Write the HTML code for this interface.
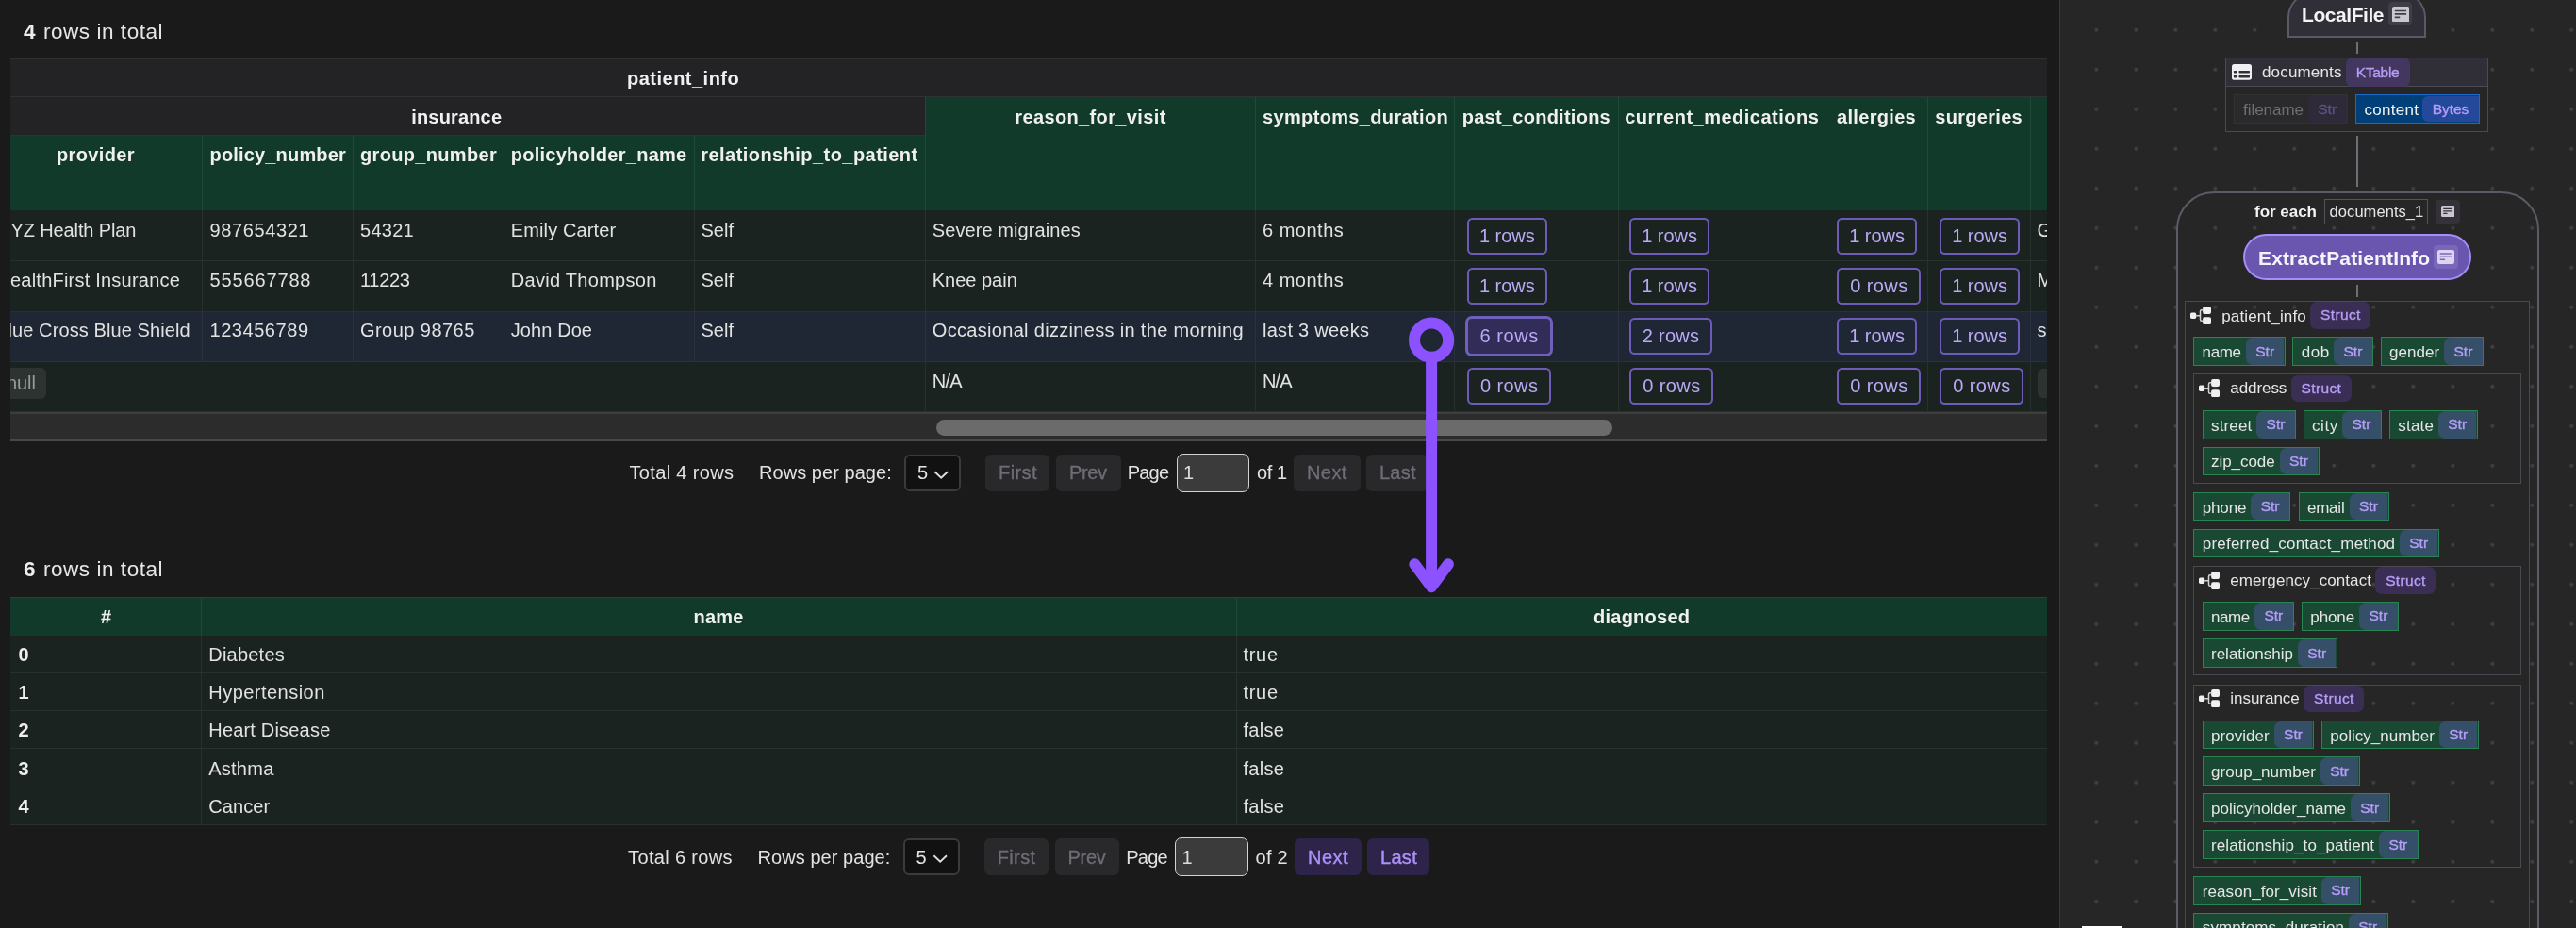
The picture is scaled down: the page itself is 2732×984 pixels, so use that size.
<!DOCTYPE html>
<html lang="en"><head><meta charset="utf-8"><title>CocoInsight data preview</title>
<style>
html,body{margin:0;padding:0;background:#1a1a1a;}
body{width:2732px;height:984px;overflow:hidden;position:relative;font-family:'Liberation Sans', sans-serif;}
div,span,svg{position:absolute;box-sizing:border-box;}
span{white-space:pre;line-height:1;}
</style></head><body>
<div id="root" style="left:0;top:0;width:2732px;height:984px;will-change:transform;">
<!-- summary 1 -->
<span style="left:25px;top:23px;font-size:22.5px;color:#eeeeee;font-weight:700;">4</span>
<span style="left:46px;top:23px;font-size:22.5px;color:#e6e6e6;letter-spacing:0.54px;">rows in total</span>
<div style="left:11px;top:60px;width:2159.5px;height:408px;overflow:hidden;">
<div style="left:0px;top:2px;width:2159.5px;height:81.5px;background:#232326;"></div>
<div style="left:0px;top:2px;width:2159.5px;height:1px;background:#2f2f32;"></div>
<div style="left:0px;top:42px;width:2159.5px;height:1px;background:#303035;"></div>
<div style="left:0px;top:82.5px;width:970.25px;height:1px;background:#303035;"></div>
<div style="left:970.25px;top:42.5px;width:1189.25px;height:120.5px;background:#113a2a;"></div>
<div style="left:0px;top:83.5px;width:970.25px;height:79.5px;background:#113a2a;"></div>
<div style="left:202.75px;top:83.5px;width:1px;height:79.5px;background:#1e4a38;"></div>
<div style="left:362.75px;top:83.5px;width:1px;height:79.5px;background:#1e4a38;"></div>
<div style="left:522.75px;top:83.5px;width:1px;height:79.5px;background:#1e4a38;"></div>
<div style="left:724.75px;top:83.5px;width:1px;height:79.5px;background:#1e4a38;"></div>
<div style="left:969.75px;top:42.5px;width:1px;height:120.5px;background:#1e4a38;"></div>
<div style="left:1320px;top:42.5px;width:1px;height:120.5px;background:#1e4a38;"></div>
<div style="left:1531.25px;top:42.5px;width:1px;height:120.5px;background:#1e4a38;"></div>
<div style="left:1704.5px;top:42.5px;width:1px;height:120.5px;background:#1e4a38;"></div>
<div style="left:1924px;top:42.5px;width:1px;height:120.5px;background:#1e4a38;"></div>
<div style="left:2033px;top:42.5px;width:1px;height:120.5px;background:#1e4a38;"></div>
<div style="left:2142px;top:42.5px;width:1px;height:120.5px;background:#1e4a38;"></div>
<div style="left:0px;top:162.5px;width:2159.5px;height:1px;background:#0f3324;"></div>
<div style="left:0px;top:163px;width:2159.5px;height:53.25px;background:#1b2321;"></div>
<div style="left:0px;top:216.25px;width:2159.5px;height:53.5px;background:#1b2321;"></div>
<div style="left:0px;top:269.75px;width:2159.5px;height:53.5px;background:#1f2634;"></div>
<div style="left:0px;top:323.25px;width:2159.5px;height:53.25px;background:#1b2321;"></div>
<div style="left:202.75px;top:163px;width:1px;height:53.25px;background:#29312e;"></div>
<div style="left:362.75px;top:163px;width:1px;height:53.25px;background:#29312e;"></div>
<div style="left:522.75px;top:163px;width:1px;height:53.25px;background:#29312e;"></div>
<div style="left:724.75px;top:163px;width:1px;height:53.25px;background:#29312e;"></div>
<div style="left:969.75px;top:163px;width:1px;height:53.25px;background:#29312e;"></div>
<div style="left:1320px;top:163px;width:1px;height:53.25px;background:#29312e;"></div>
<div style="left:1531.25px;top:163px;width:1px;height:53.25px;background:#29312e;"></div>
<div style="left:1704.5px;top:163px;width:1px;height:53.25px;background:#29312e;"></div>
<div style="left:1924px;top:163px;width:1px;height:53.25px;background:#29312e;"></div>
<div style="left:2033px;top:163px;width:1px;height:53.25px;background:#29312e;"></div>
<div style="left:2142px;top:163px;width:1px;height:53.25px;background:#29312e;"></div>
<div style="left:0px;top:216px;width:2159.5px;height:1px;background:#29312e;"></div>
<div style="left:202.75px;top:216.25px;width:1px;height:53.5px;background:#29312e;"></div>
<div style="left:362.75px;top:216.25px;width:1px;height:53.5px;background:#29312e;"></div>
<div style="left:522.75px;top:216.25px;width:1px;height:53.5px;background:#29312e;"></div>
<div style="left:724.75px;top:216.25px;width:1px;height:53.5px;background:#29312e;"></div>
<div style="left:969.75px;top:216.25px;width:1px;height:53.5px;background:#29312e;"></div>
<div style="left:1320px;top:216.25px;width:1px;height:53.5px;background:#29312e;"></div>
<div style="left:1531.25px;top:216.25px;width:1px;height:53.5px;background:#29312e;"></div>
<div style="left:1704.5px;top:216.25px;width:1px;height:53.5px;background:#29312e;"></div>
<div style="left:1924px;top:216.25px;width:1px;height:53.5px;background:#29312e;"></div>
<div style="left:2033px;top:216.25px;width:1px;height:53.5px;background:#29312e;"></div>
<div style="left:2142px;top:216.25px;width:1px;height:53.5px;background:#29312e;"></div>
<div style="left:0px;top:269.5px;width:2159.5px;height:1px;background:#29312e;"></div>
<div style="left:202.75px;top:269.75px;width:1px;height:53.5px;background:#2b3040;"></div>
<div style="left:362.75px;top:269.75px;width:1px;height:53.5px;background:#2b3040;"></div>
<div style="left:522.75px;top:269.75px;width:1px;height:53.5px;background:#2b3040;"></div>
<div style="left:724.75px;top:269.75px;width:1px;height:53.5px;background:#2b3040;"></div>
<div style="left:969.75px;top:269.75px;width:1px;height:53.5px;background:#2b3040;"></div>
<div style="left:1320px;top:269.75px;width:1px;height:53.5px;background:#2b3040;"></div>
<div style="left:1531.25px;top:269.75px;width:1px;height:53.5px;background:#2b3040;"></div>
<div style="left:1704.5px;top:269.75px;width:1px;height:53.5px;background:#2b3040;"></div>
<div style="left:1924px;top:269.75px;width:1px;height:53.5px;background:#2b3040;"></div>
<div style="left:2033px;top:269.75px;width:1px;height:53.5px;background:#2b3040;"></div>
<div style="left:2142px;top:269.75px;width:1px;height:53.5px;background:#2b3040;"></div>
<div style="left:0px;top:323px;width:2159.5px;height:1px;background:#2b3040;"></div>
<div style="left:969.75px;top:323.25px;width:1px;height:53.25px;background:#29312e;"></div>
<div style="left:1320px;top:323.25px;width:1px;height:53.25px;background:#29312e;"></div>
<div style="left:1531.25px;top:323.25px;width:1px;height:53.25px;background:#29312e;"></div>
<div style="left:1704.5px;top:323.25px;width:1px;height:53.25px;background:#29312e;"></div>
<div style="left:1924px;top:323.25px;width:1px;height:53.25px;background:#29312e;"></div>
<div style="left:2033px;top:323.25px;width:1px;height:53.25px;background:#29312e;"></div>
<div style="left:2142px;top:323.25px;width:1px;height:53.25px;background:#29312e;"></div>
<div style="left:0px;top:376.25px;width:2159.5px;height:1px;background:#29312e;"></div>
<span style="left:654px;top:13px;font-size:20px;color:#f0f0f0;font-weight:700;letter-spacing:0.49px;">patient_info</span>
<span style="left:425.25px;top:54px;font-size:20px;color:#f0f0f0;font-weight:700;letter-spacing:0.16px;">insurance</span>
<span style="left:49px;top:94px;font-size:20px;color:#f0f0f0;font-weight:700;letter-spacing:0.35px;">provider</span>
<span style="left:211.5px;top:94px;font-size:20px;color:#f0f0f0;font-weight:700;letter-spacing:0.17px;">policy_number</span>
<span style="left:371px;top:94px;font-size:20px;color:#f0f0f0;font-weight:700;letter-spacing:0.33px;">group_number</span>
<span style="left:530.75px;top:94px;font-size:20px;color:#f0f0f0;font-weight:700;letter-spacing:0.26px;">policyholder_name</span>
<span style="left:732.25px;top:94px;font-size:20px;color:#f0f0f0;font-weight:700;letter-spacing:0.45px;">relationship_to_patient</span>
<span style="left:1065.25px;top:54px;font-size:20px;color:#f0f0f0;font-weight:700;letter-spacing:0.37px;">reason_for_visit</span>
<span style="left:1328px;top:54px;font-size:20px;color:#f0f0f0;font-weight:700;letter-spacing:0.35px;">symptoms_duration</span>
<span style="left:1539.75px;top:54px;font-size:20px;color:#f0f0f0;font-weight:700;letter-spacing:0.26px;">past_conditions</span>
<span style="left:1712.25px;top:54px;font-size:20px;color:#f0f0f0;font-weight:700;letter-spacing:0.49px;">current_medications</span>
<span style="left:1937px;top:54px;font-size:20px;color:#f0f0f0;font-weight:700;letter-spacing:0.32px;">allergies</span>
<span style="left:2041.25px;top:54px;font-size:20px;color:#f0f0f0;font-weight:700;letter-spacing:0.3px;">surgeries</span>
<span style="left:-12.73px;top:174px;font-size:20px;color:#e2e2e2;letter-spacing:-0.12px;">XYZ Health Plan</span>
<span style="left:211.5px;top:174px;font-size:20px;color:#e2e2e2;letter-spacing:0.61px;">987654321</span>
<span style="left:371px;top:174px;font-size:20px;color:#e2e2e2;letter-spacing:0.28px;">54321</span>
<span style="left:530.75px;top:174px;font-size:20px;color:#e2e2e2;letter-spacing:0.13px;">Emily Carter</span>
<span style="left:732.5px;top:174px;font-size:20px;color:#e2e2e2;letter-spacing:0.01px;">Self</span>
<span style="left:977.75px;top:174px;font-size:20px;color:#e2e2e2;letter-spacing:0.09px;">Severe migraines</span>
<span style="left:1328px;top:174px;font-size:20px;color:#e2e2e2;letter-spacing:0.5px;">6 months</span>
<span style="left:-14.65px;top:227px;font-size:20px;color:#e2e2e2;letter-spacing:0.22px;">HealthFirst Insurance</span>
<span style="left:211.5px;top:227px;font-size:20px;color:#e2e2e2;letter-spacing:0.86px;">555667788</span>
<span style="left:371px;top:227px;font-size:20px;color:#e2e2e2;letter-spacing:-0.29px;">11223</span>
<span style="left:530.75px;top:227px;font-size:20px;color:#e2e2e2;letter-spacing:0.29px;">David Thompson</span>
<span style="left:732.5px;top:227px;font-size:20px;color:#e2e2e2;letter-spacing:0.01px;">Self</span>
<span style="left:977.75px;top:227px;font-size:20px;color:#e2e2e2;letter-spacing:-0.01px;">Knee pain</span>
<span style="left:1328px;top:227px;font-size:20px;color:#e2e2e2;letter-spacing:0.5px;">4 months</span>
<span style="left:-15.99px;top:280px;font-size:20px;color:#e2e2e2;letter-spacing:0.1px;">Blue Cross Blue Shield</span>
<span style="left:211.5px;top:280px;font-size:20px;color:#e2e2e2;letter-spacing:0.55px;">123456789</span>
<span style="left:371px;top:280px;font-size:20px;color:#e2e2e2;letter-spacing:0.45px;">Group 98765</span>
<span style="left:530.75px;top:280px;font-size:20px;color:#e2e2e2;letter-spacing:0.09px;">John Doe</span>
<span style="left:732.5px;top:280px;font-size:20px;color:#e2e2e2;letter-spacing:0.01px;">Self</span>
<span style="left:977.75px;top:280px;font-size:20px;color:#e2e2e2;letter-spacing:0.32px;">Occasional dizziness in the morning</span>
<span style="left:1328px;top:280px;font-size:20px;color:#e2e2e2;letter-spacing:0.27px;">last 3 weeks</span>
<span style="left:977.75px;top:334px;font-size:20px;color:#e2e2e2;letter-spacing:-0.77px;">N/A</span>
<span style="left:1328px;top:334px;font-size:20px;color:#e2e2e2;letter-spacing:-0.87px;">N/A</span>
<div style="left:-17px;top:330px;width:54.75px;height:32.5px;background:#2c3331;border-radius:6px;"></div>
<span style="left:-4.14px;top:336px;font-size:20px;color:#9a9a9a;">null</span>
<span style="left:2149.5px;top:174px;font-size:20px;color:#e2e2e2;">General</span>
<span style="left:2149.5px;top:227px;font-size:20px;color:#e2e2e2;">Moderate</span>
<span style="left:2149.5px;top:280px;font-size:20px;color:#e2e2e2;">social drinker</span>
<div style="left:2149.7px;top:331.4px;width:60px;height:31px;background:#2c3331;border-radius:6px;"></div>
<div style="left:1544.75px;top:170.75px;width:85.25px;height:38.75px;border:2px solid #6c5cb8;border-radius:5.5px;"></div>
<span style="left:1558px;top:180px;font-size:20px;color:#bba8f6;letter-spacing:-0.03px;">1 rows</span>
<div style="left:1717px;top:170.75px;width:85.25px;height:38.75px;border:2px solid #6c5cb8;border-radius:5.5px;"></div>
<span style="left:1730.25px;top:180px;font-size:20px;color:#bba8f6;letter-spacing:-0.03px;">1 rows</span>
<div style="left:1937px;top:170.75px;width:85.25px;height:38.75px;border:2px solid #6c5cb8;border-radius:5.5px;"></div>
<span style="left:1950.25px;top:180px;font-size:20px;color:#bba8f6;letter-spacing:-0.03px;">1 rows</span>
<div style="left:2046px;top:170.75px;width:85.25px;height:38.75px;border:2px solid #6c5cb8;border-radius:5.5px;"></div>
<span style="left:2059.25px;top:180px;font-size:20px;color:#bba8f6;letter-spacing:-0.03px;">1 rows</span>
<div style="left:1544.75px;top:224px;width:85.25px;height:38.75px;border:2px solid #6c5cb8;border-radius:5.5px;"></div>
<span style="left:1558px;top:233px;font-size:20px;color:#bba8f6;letter-spacing:-0.03px;">1 rows</span>
<div style="left:1717px;top:224px;width:85.25px;height:38.75px;border:2px solid #6c5cb8;border-radius:5.5px;"></div>
<span style="left:1730.25px;top:233px;font-size:20px;color:#bba8f6;letter-spacing:-0.03px;">1 rows</span>
<div style="left:1937px;top:224px;width:89.35px;height:38.75px;border:2px solid #6c5cb8;border-radius:5.5px;"></div>
<span style="left:1951.17px;top:233px;font-size:20px;color:#bba8f6;letter-spacing:0.42px;">0 rows</span>
<div style="left:2046px;top:224px;width:85.25px;height:38.75px;border:2px solid #6c5cb8;border-radius:5.5px;"></div>
<span style="left:2059.25px;top:233px;font-size:20px;color:#bba8f6;letter-spacing:-0.03px;">1 rows</span>
<div style="left:1542.75px;top:274.95px;width:93.55px;height:42.6px;background:#312c58;border:3px solid #6f60ba;border-radius:7px;"></div>
<span style="left:1558.47px;top:286px;font-size:20px;color:#bba8f6;letter-spacing:0.6px;">6 rows</span>
<div style="left:1717px;top:277.25px;width:87.8px;height:38.75px;border:2px solid #6c5cb8;border-radius:5.5px;"></div>
<span style="left:1730.75px;top:286px;font-size:20px;color:#bba8f6;letter-spacing:0.28px;">2 rows</span>
<div style="left:1937px;top:277.25px;width:85.25px;height:38.75px;border:2px solid #6c5cb8;border-radius:5.5px;"></div>
<span style="left:1950.25px;top:286px;font-size:20px;color:#bba8f6;letter-spacing:-0.03px;">1 rows</span>
<div style="left:2046px;top:277.25px;width:85.25px;height:38.75px;border:2px solid #6c5cb8;border-radius:5.5px;"></div>
<span style="left:2059.25px;top:286px;font-size:20px;color:#bba8f6;letter-spacing:-0.03px;">1 rows</span>
<div style="left:1544.75px;top:330.25px;width:89.35px;height:38.75px;border:2px solid #6c5cb8;border-radius:5.5px;"></div>
<span style="left:1558.92px;top:339px;font-size:20px;color:#bba8f6;letter-spacing:0.42px;">0 rows</span>
<div style="left:1717px;top:330.25px;width:89.35px;height:38.75px;border:2px solid #6c5cb8;border-radius:5.5px;"></div>
<span style="left:1731.17px;top:339px;font-size:20px;color:#bba8f6;letter-spacing:0.42px;">0 rows</span>
<div style="left:1937px;top:330.25px;width:89.35px;height:38.75px;border:2px solid #6c5cb8;border-radius:5.5px;"></div>
<span style="left:1951.17px;top:339px;font-size:20px;color:#bba8f6;letter-spacing:0.42px;">0 rows</span>
<div style="left:2046px;top:330.25px;width:89.35px;height:38.75px;border:2px solid #6c5cb8;border-radius:5.5px;"></div>
<span style="left:2060.18px;top:339px;font-size:20px;color:#bba8f6;letter-spacing:0.42px;">0 rows</span>
<div style="left:0px;top:376.5px;width:2159.5px;height:31.5px;background:#2c2c2c;"></div>
<div style="left:0px;top:376.5px;width:2159.5px;height:2.7px;background:#3e3e3e;"></div>
<div style="left:0px;top:405.6px;width:2159.5px;height:2.4px;background:#484848;"></div>
<div style="left:981.8px;top:384.9px;width:717.7px;height:16.7px;background:#6b6b6b;border-radius:8.4px;"></div>
</div>
<span style="left:667.5px;top:491px;font-size:20px;color:#e2e2e2;letter-spacing:0.34px;">Total 4 rows</span>
<span style="left:805px;top:491px;font-size:20px;color:#e2e2e2;letter-spacing:0.05px;">Rows per page:</span>
<div style="left:959.25px;top:482px;width:60px;height:38.5px;background:#111111;border:2px solid #3b3b3d;border-radius:6px;"></div>
<span style="left:973px;top:491px;font-size:20px;color:#e2e2e2;">5</span>
<svg style="left:990.25px;top:496.75px" width="17" height="12" viewBox="0 0 17 12"><path d="M1.4 3.3 L8.2 9.7 L15 3.3" fill="none" stroke="#dedede" stroke-width="1.9"/></svg>
<div style="left:1045px;top:482px;width:68.25px;height:38.5px;background:#29292c;border-radius:6px;"></div>
<span style="left:1059.1px;top:491px;font-size:20px;color:#6e6e78;letter-spacing:0.38px;-webkit-text-stroke:0.3px #6e6e78;">First</span>
<div style="left:1120px;top:482px;width:68.75px;height:38.5px;background:#29292c;border-radius:6px;"></div>
<span style="left:1133.9px;top:491px;font-size:20px;color:#6e6e78;letter-spacing:-0.31px;-webkit-text-stroke:0.3px #6e6e78;">Prev</span>
<span style="left:1195.75px;top:491px;font-size:20px;color:#e2e2e2;letter-spacing:-0.82px;">Page</span>
<div style="left:1247.5px;top:480.75px;width:77.5px;height:41px;background:#3b3b3b;border:1.6px solid #d2d2d2;border-radius:7px;"></div>
<span style="left:1255px;top:491px;font-size:20px;color:#dcdcdc;">1</span>
<span style="left:1333px;top:491px;font-size:20px;color:#e2e2e2;letter-spacing:-0.45px;">of 1</span>
<div style="left:1372px;top:482px;width:70.5px;height:38.5px;background:#29292c;border-radius:6px;"></div>
<span style="left:1386px;top:491px;font-size:20px;color:#6e6e78;letter-spacing:0.42px;-webkit-text-stroke:0.3px #6e6e78;">Next</span>
<div style="left:1448.75px;top:482px;width:66.5px;height:38.5px;background:#29292c;border-radius:6px;"></div>
<span style="left:1462.88px;top:491px;font-size:20px;color:#6e6e78;letter-spacing:0.31px;-webkit-text-stroke:0.3px #6e6e78;">Last</span>
<span style="left:25px;top:593px;font-size:22.5px;color:#eeeeee;font-weight:700;">6</span>
<span style="left:46px;top:593px;font-size:22.5px;color:#e6e6e6;letter-spacing:0.54px;">rows in total</span>
<div style="left:11px;top:633px;width:2159.5px;height:241.5px;overflow:hidden;">
<div style="left:0px;top:0px;width:2159.5px;height:40.75px;background:#113a2a;"></div>
<div style="left:0px;top:0px;width:2159.5px;height:1px;background:#1a4a37;"></div>
<div style="left:201.75px;top:0px;width:1px;height:40.75px;background:#1e4a38;"></div>
<div style="left:1300px;top:0px;width:1px;height:40.75px;background:#1e4a38;"></div>
<div style="left:0px;top:40.75px;width:2159.5px;height:40px;background:#1b2321;"></div>
<div style="left:0px;top:80.75px;width:2159.5px;height:39.75px;background:#1b2321;"></div>
<div style="left:0px;top:120.5px;width:2159.5px;height:39.6px;background:#1b2321;"></div>
<div style="left:0px;top:160.1px;width:2159.5px;height:41.1px;background:#1b2321;"></div>
<div style="left:0px;top:201.2px;width:2159.5px;height:40.2px;background:#1b2321;"></div>
<div style="left:201.75px;top:40.75px;width:1px;height:40px;background:#29312e;"></div>
<div style="left:1300px;top:40.75px;width:1px;height:40px;background:#29312e;"></div>
<div style="left:0px;top:80.25px;width:2159.5px;height:1px;background:#29312e;"></div>
<div style="left:201.75px;top:80.75px;width:1px;height:39.75px;background:#29312e;"></div>
<div style="left:1300px;top:80.75px;width:1px;height:39.75px;background:#29312e;"></div>
<div style="left:0px;top:120px;width:2159.5px;height:1px;background:#29312e;"></div>
<div style="left:201.75px;top:120.5px;width:1px;height:39.6px;background:#29312e;"></div>
<div style="left:1300px;top:120.5px;width:1px;height:39.6px;background:#29312e;"></div>
<div style="left:0px;top:159.6px;width:2159.5px;height:1px;background:#29312e;"></div>
<div style="left:201.75px;top:160.1px;width:1px;height:41.1px;background:#29312e;"></div>
<div style="left:1300px;top:160.1px;width:1px;height:41.1px;background:#29312e;"></div>
<div style="left:0px;top:200.7px;width:2159.5px;height:1px;background:#29312e;"></div>
<div style="left:201.75px;top:201.2px;width:1px;height:40.2px;background:#29312e;"></div>
<div style="left:1300px;top:201.2px;width:1px;height:40.2px;background:#29312e;"></div>
<div style="left:0px;top:240.9px;width:2159.5px;height:1px;background:#29312e;"></div>
<span style="left:95.94px;top:11px;font-size:20px;color:#f0f0f0;font-weight:700;">#</span>
<span style="left:724.5px;top:11px;font-size:20px;color:#f0f0f0;font-weight:700;letter-spacing:0.25px;">name</span>
<span style="left:1679px;top:11px;font-size:20px;color:#f0f0f0;font-weight:700;letter-spacing:0.25px;">diagnosed</span>
<span style="left:8.5px;top:51px;font-size:20px;color:#eeeeee;font-weight:700;">0</span>
<span style="left:210.25px;top:51px;font-size:20px;color:#e2e2e2;letter-spacing:0.22px;">Diabetes</span>
<span style="left:1307.5px;top:51px;font-size:20px;color:#e2e2e2;letter-spacing:0.68px;">true</span>
<span style="left:8.5px;top:91px;font-size:20px;color:#eeeeee;font-weight:700;">1</span>
<span style="left:210.25px;top:91px;font-size:20px;color:#e2e2e2;letter-spacing:0.47px;">Hypertension</span>
<span style="left:1307.5px;top:91px;font-size:20px;color:#e2e2e2;letter-spacing:0.68px;">true</span>
<span style="left:8.5px;top:131px;font-size:20px;color:#eeeeee;font-weight:700;">2</span>
<span style="left:210.25px;top:131px;font-size:20px;color:#e2e2e2;letter-spacing:0.19px;">Heart Disease</span>
<span style="left:1307.5px;top:131px;font-size:20px;color:#e2e2e2;letter-spacing:0.31px;">false</span>
<span style="left:8.5px;top:172px;font-size:20px;color:#eeeeee;font-weight:700;">3</span>
<span style="left:210.25px;top:172px;font-size:20px;color:#e2e2e2;letter-spacing:0.24px;">Asthma</span>
<span style="left:1307.5px;top:172px;font-size:20px;color:#e2e2e2;letter-spacing:0.31px;">false</span>
<span style="left:8.5px;top:212px;font-size:20px;color:#eeeeee;font-weight:700;">4</span>
<span style="left:210.25px;top:212px;font-size:20px;color:#e2e2e2;letter-spacing:0.1px;">Cancer</span>
<span style="left:1307.5px;top:212px;font-size:20px;color:#e2e2e2;letter-spacing:0.31px;">false</span>
</div>
<span style="left:666.1px;top:899px;font-size:20px;color:#e2e2e2;letter-spacing:0.34px;">Total 6 rows</span>
<span style="left:803.6px;top:899px;font-size:20px;color:#e2e2e2;letter-spacing:0.05px;">Rows per page:</span>
<div style="left:957.85px;top:889.25px;width:60px;height:38.5px;background:#111111;border:2px solid #3b3b3d;border-radius:6px;"></div>
<span style="left:971.6px;top:899px;font-size:20px;color:#e2e2e2;">5</span>
<svg style="left:988.85px;top:904px" width="17" height="12" viewBox="0 0 17 12"><path d="M1.4 3.3 L8.2 9.7 L15 3.3" fill="none" stroke="#dedede" stroke-width="1.9"/></svg>
<div style="left:1043.6px;top:889.25px;width:68.25px;height:38.5px;background:#29292c;border-radius:6px;"></div>
<span style="left:1057.7px;top:899px;font-size:20px;color:#6e6e78;letter-spacing:0.38px;-webkit-text-stroke:0.3px #6e6e78;">First</span>
<div style="left:1118.6px;top:889.25px;width:68.75px;height:38.5px;background:#29292c;border-radius:6px;"></div>
<span style="left:1132.5px;top:899px;font-size:20px;color:#6e6e78;letter-spacing:-0.31px;-webkit-text-stroke:0.3px #6e6e78;">Prev</span>
<span style="left:1194.35px;top:899px;font-size:20px;color:#e2e2e2;letter-spacing:-0.82px;">Page</span>
<div style="left:1246.1px;top:888px;width:77.5px;height:41px;background:#3b3b3b;border:1.6px solid #d2d2d2;border-radius:7px;"></div>
<span style="left:1253.6px;top:899px;font-size:20px;color:#dcdcdc;">1</span>
<span style="left:1331.6px;top:899px;font-size:20px;color:#e2e2e2;letter-spacing:0.25px;">of 2</span>
<div style="left:1373.1px;top:889.25px;width:70.5px;height:38.5px;background:#2e2449;border-radius:6px;"></div>
<span style="left:1387.1px;top:899px;font-size:20px;color:#ac90fb;letter-spacing:0.42px;-webkit-text-stroke:0.4px #ac90fb;">Next</span>
<div style="left:1449.85px;top:889.25px;width:66.5px;height:38.5px;background:#2e2449;border-radius:6px;"></div>
<span style="left:1463.97px;top:899px;font-size:20px;color:#ac90fb;letter-spacing:0.31px;-webkit-text-stroke:0.4px #ac90fb;">Last</span>
<div style="left:2184px;top:0px;width:548px;height:984px;overflow:hidden;background-color:#262626;background-image:radial-gradient(circle at 2.5px 2.5px,#404043 1.5px,transparent 2.4px);background-size:42px 42px;background-position:36.8px 29.3px;">
<div style="left:0px;top:0px;width:1px;height:984px;background:#3a3a3c;"></div>
<div style="left:242px;top:-9.5px;width:146.8px;height:49.3px;background:#302e36;border:2px solid #5b5966;border-radius:28px 28px 0 0;"></div>
<span style="left:257px;top:5px;font-size:21px;color:#f4f4f4;font-weight:700;letter-spacing:-0.44px;">LocalFile</span>
<div style="left:349.3px;top:1.7px;width:25.2px;height:25.2px;background:#403e45;border-radius:4.5px;"></div>
<svg style="left:352.5px;top:6.7px" width="18.3" height="16.6" viewBox="0 0 18.3 16.6" preserveAspectRatio="none"><rect x="0" y="0" width="18.3" height="16.6" rx="2.2" fill="#c9c7d3"/><path d="M2.8 4.5H15.1M2.8 7.95H15.1M2.8 11.4H8.2" stroke="#403e45" stroke-width="1.7" fill="none"/></svg>
<div style="left:314.5px;top:44.5px;width:2px;height:12.5px;background:#6f6d76;"></div>
<div style="left:176px;top:61.4px;width:278.5px;height:78.2px;border:1px solid #4b4953;"></div>
<div style="left:177px;top:62.4px;width:276.5px;height:29.2px;background:#302e36;"></div>
<div style="left:177px;top:91.1px;width:276.5px;height:1px;background:#4b4953;"></div>
<svg style="left:183px;top:68.07px" width="21.1" height="16.8" viewBox="0 0 21.1 16.8"><rect width="21.1" height="16.8" rx="2.6" fill="#f0f0f2"/><g fill="#302e36"><rect x="1.9" y="6.9" width="3.9" height="2.6" rx="0.7"/><rect x="7.5" y="6.9" width="11.5" height="2.6" rx="0.7"/><rect x="1.9" y="11.8" width="3.9" height="2.6" rx="0.7"/><rect x="7.5" y="11.8" width="11.5" height="2.6" rx="0.7"/></g></svg>
<span style="left:215px;top:68px;font-size:17px;color:#e6e6e6;letter-spacing:0.17px;">documents</span>
<div style="left:304px;top:61.4px;width:67.5px;height:30.2px;background:#43365f;border-radius:7px;"></div>
<span style="left:314.65px;top:69px;font-size:15.5px;color:#b69df8;letter-spacing:-0.26px;-webkit-text-stroke:0.35px #b69df8;">KTable</span>
<div style="left:185px;top:100.4px;width:120.5px;height:30.2px;background:#2a2a2c;border:1px solid #323234;"></div>
<span style="left:195px;top:108px;font-size:17px;color:#6f6f73;letter-spacing:-0.04px;">filename</span>
<div style="left:264px;top:101.4px;width:40.5px;height:28.2px;background:#2e2a3a;border-radius:6px 0 0 6px;"></div>
<span style="left:274.29px;top:108px;font-size:15.5px;color:#5d5380;-webkit-text-stroke:0.3px #5d5380;">Str</span>
<div style="left:313.5px;top:100.4px;width:132.5px;height:30.2px;background:#003f77;border:1.2px solid #1b69c8;"></div>
<span style="left:323.5px;top:108px;font-size:17px;color:#f2f2f2;letter-spacing:0.29px;">content</span>
<div style="left:385px;top:101.9px;width:59.5px;height:27.2px;background:#24499b;border-radius:6px 0 0 6px;"></div>
<span style="left:395.75px;top:108px;font-size:15.5px;color:#b69df8;letter-spacing:-0.07px;-webkit-text-stroke:0.35px #b69df8;">Bytes</span>
<div style="left:314.5px;top:144px;width:2px;height:54px;background:#6f6d76;"></div>
<div style="left:123.5px;top:203px;width:385px;height:900px;border:2px solid #5c5a65;border-radius:40px;"></div>
<span style="left:207px;top:216px;font-size:17px;color:#f2f2f2;font-weight:700;letter-spacing:-0.02px;">for each</span>
<div style="left:281px;top:211px;width:110.3px;height:26.7px;border:1px solid #55535c;"></div>
<span style="left:286.6px;top:216px;font-size:16.5px;color:#e6e6e6;letter-spacing:0.06px;">documents_1</span>
<div style="left:399px;top:212px;width:25.5px;height:24.8px;background:#343238;border-radius:4px;"></div>
<svg style="left:404.8px;top:218.3px" width="14.6" height="12.1" viewBox="0 0 18.3 16.6" preserveAspectRatio="none"><rect x="0" y="0" width="18.3" height="16.6" rx="2.2" fill="#c9c6d2"/><path d="M2.8 4.5H15.1M2.8 7.95H15.1M2.8 11.4H8.2" stroke="#343238" stroke-width="1.7" fill="none"/></svg>
<div style="left:195px;top:247.6px;width:242.4px;height:49.7px;background:#6a55af;border:2px solid #a88cf9;border-radius:25px;"></div>
<span style="left:211px;top:263px;font-size:21px;color:#f6f4fb;font-weight:700;letter-spacing:0.14px;">ExtractPatientInfo</span>
<div style="left:397px;top:260.3px;width:26.3px;height:24.7px;background:#7a67ba;border-radius:4px;"></div>
<svg style="left:401px;top:265.2px" width="18" height="15" viewBox="0 0 18.3 16.6" preserveAspectRatio="none"><rect x="0" y="0" width="18.3" height="16.6" rx="2.2" fill="#dcd5f1"/><path d="M2.8 4.5H15.1M2.8 7.95H15.1M2.8 11.4H8.2" stroke="#7a67ba" stroke-width="1.7" fill="none"/></svg>
<div style="left:314.5px;top:302.4px;width:2px;height:12.6px;background:#6f6d76;"></div>
<div style="left:133.3px;top:318.8px;width:365.7px;height:900px;border:1px solid #4a4851;"></div>
<svg style="left:138.8px;top:324.6px" width="22" height="19.1" viewBox="0 0 22 19.1"><path d="M13.1 3.7H12Q10.5 3.7 10.5 5.2V13.8Q10.5 15.3 12 15.3H13.1M6.2 9.7H10.5" stroke="#d4d4d4" stroke-width="1.5" fill="none"/><rect x="0" y="6.4" width="6.2" height="6.5" rx="1.6" fill="#f0f0f0"/><rect x="13.1" y="0" width="8.9" height="8" rx="1.9" fill="#f0f0f0"/><rect x="13.1" y="11.3" width="8.9" height="7.8" rx="1.9" fill="#f0f0f0"/></svg>
<span style="left:172.2px;top:327px;font-size:17px;color:#e6e6e6;letter-spacing:0.15px;">patient_info</span>
<div style="left:266.2px;top:320px;width:64px;height:28.8px;background:#3b2e55;border-radius:7px;"></div>
<span style="left:277.05px;top:326px;font-size:15.5px;color:#b69df8;letter-spacing:0.36px;-webkit-text-stroke:0.35px #b69df8;">Struct</span>
<div style="left:142.2px;top:357.2px;width:97.8px;height:30.6px;background:#194833;border:1px solid #288552;"></div>
<span style="left:151.6px;top:365px;font-size:17px;color:#e6e6e6;letter-spacing:-0.38px;">name</span>
<div style="left:197.9px;top:358.2px;width:40.6px;height:28.6px;background:#354f69;border-radius:7px 0 0 7px;"></div>
<span style="left:208.29px;top:365px;font-size:15.5px;color:#b69df8;-webkit-text-stroke:0.35px #b69df8;">Str</span>
<div style="left:247.4px;top:357.2px;width:85.8px;height:30.6px;background:#194833;border:1px solid #288552;"></div>
<span style="left:256.8px;top:365px;font-size:17px;color:#e6e6e6;letter-spacing:0.51px;">dob</span>
<div style="left:291.1px;top:358.2px;width:40.6px;height:28.6px;background:#354f69;border-radius:7px 0 0 7px;"></div>
<span style="left:301.49px;top:365px;font-size:15.5px;color:#b69df8;-webkit-text-stroke:0.35px #b69df8;">Str</span>
<div style="left:340.6px;top:357.2px;width:109.6px;height:30.6px;background:#194833;border:1px solid #288552;"></div>
<span style="left:350px;top:365px;font-size:17px;color:#e6e6e6;letter-spacing:0.05px;">gender</span>
<div style="left:408.1px;top:358.2px;width:40.6px;height:28.6px;background:#354f69;border-radius:7px 0 0 7px;"></div>
<span style="left:418.49px;top:365px;font-size:15.5px;color:#b69df8;-webkit-text-stroke:0.35px #b69df8;">Str</span>
<div style="left:142.4px;top:396.3px;width:347.6px;height:116.9px;border:1px solid #4a4851;"></div>
<svg style="left:147.9px;top:402.1px" width="22" height="19.1" viewBox="0 0 22 19.1"><path d="M13.1 3.7H12Q10.5 3.7 10.5 5.2V13.8Q10.5 15.3 12 15.3H13.1M6.2 9.7H10.5" stroke="#d4d4d4" stroke-width="1.5" fill="none"/><rect x="0" y="6.4" width="6.2" height="6.5" rx="1.6" fill="#f0f0f0"/><rect x="13.1" y="0" width="8.9" height="8" rx="1.9" fill="#f0f0f0"/><rect x="13.1" y="11.3" width="8.9" height="7.8" rx="1.9" fill="#f0f0f0"/></svg>
<span style="left:181.3px;top:403px;font-size:17px;color:#e6e6e6;letter-spacing:-0.08px;">address</span>
<div style="left:245.7px;top:397.5px;width:64px;height:28.2px;background:#3b2e55;border-radius:7px;"></div>
<span style="left:256.55px;top:404px;font-size:15.5px;color:#b69df8;letter-spacing:0.36px;-webkit-text-stroke:0.35px #b69df8;">Struct</span>
<div style="left:151.6px;top:435px;width:99.7px;height:30.6px;background:#194833;border:1px solid #288552;"></div>
<span style="left:161px;top:443px;font-size:17px;color:#e6e6e6;letter-spacing:0.15px;">street</span>
<div style="left:209.2px;top:436px;width:40.6px;height:28.6px;background:#354f69;border-radius:7px 0 0 7px;"></div>
<span style="left:219.59px;top:442px;font-size:15.5px;color:#b69df8;-webkit-text-stroke:0.35px #b69df8;">Str</span>
<div style="left:258.6px;top:435px;width:83.6px;height:30.6px;background:#194833;border:1px solid #288552;"></div>
<span style="left:268px;top:443px;font-size:17px;color:#e6e6e6;letter-spacing:0.57px;">city</span>
<div style="left:300.1px;top:436px;width:40.6px;height:28.6px;background:#354f69;border-radius:7px 0 0 7px;"></div>
<span style="left:310.49px;top:442px;font-size:15.5px;color:#b69df8;-webkit-text-stroke:0.35px #b69df8;">Str</span>
<div style="left:349.8px;top:435px;width:94.2px;height:30.6px;background:#194833;border:1px solid #288552;"></div>
<span style="left:359.2px;top:443px;font-size:17px;color:#e6e6e6;letter-spacing:0.24px;">state</span>
<div style="left:401.9px;top:436px;width:40.6px;height:28.6px;background:#354f69;border-radius:7px 0 0 7px;"></div>
<span style="left:412.29px;top:442px;font-size:15.5px;color:#b69df8;-webkit-text-stroke:0.35px #b69df8;">Str</span>
<div style="left:151.6px;top:473.6px;width:124.1px;height:30.6px;background:#194833;border:1px solid #288552;"></div>
<span style="left:161px;top:481px;font-size:17px;color:#e6e6e6;letter-spacing:-0.05px;">zip_code</span>
<div style="left:233.6px;top:474.6px;width:40.6px;height:28.6px;background:#354f69;border-radius:7px 0 0 7px;"></div>
<span style="left:243.99px;top:481px;font-size:15.5px;color:#b69df8;-webkit-text-stroke:0.35px #b69df8;">Str</span>
<div style="left:142.4px;top:521.8px;width:103px;height:30.6px;background:#194833;border:1px solid #288552;"></div>
<span style="left:151.8px;top:530px;font-size:17px;color:#e6e6e6;letter-spacing:-0.17px;">phone</span>
<div style="left:203.3px;top:522.8px;width:40.6px;height:28.6px;background:#354f69;border-radius:7px 0 0 7px;"></div>
<span style="left:213.69px;top:529px;font-size:15.5px;color:#b69df8;-webkit-text-stroke:0.35px #b69df8;">Str</span>
<div style="left:253.5px;top:521.8px;width:96.2px;height:30.6px;background:#194833;border:1px solid #288552;"></div>
<span style="left:262.9px;top:530px;font-size:17px;color:#e6e6e6;letter-spacing:-0.21px;">email</span>
<div style="left:307.6px;top:522.8px;width:40.6px;height:28.6px;background:#354f69;border-radius:7px 0 0 7px;"></div>
<span style="left:317.99px;top:529px;font-size:15.5px;color:#b69df8;-webkit-text-stroke:0.35px #b69df8;">Str</span>
<div style="left:142.4px;top:560.7px;width:260.6px;height:30.6px;background:#194833;border:1px solid #288552;"></div>
<span style="left:151.8px;top:568px;font-size:17px;color:#e6e6e6;letter-spacing:0.21px;">preferred_contact_method</span>
<div style="left:360.9px;top:561.7px;width:40.6px;height:28.6px;background:#354f69;border-radius:7px 0 0 7px;"></div>
<span style="left:371.29px;top:568px;font-size:15.5px;color:#b69df8;-webkit-text-stroke:0.35px #b69df8;">Str</span>
<div style="left:142.4px;top:600.2px;width:347.6px;height:115.8px;border:1px solid #4a4851;"></div>
<svg style="left:147.9px;top:606px" width="22" height="19.1" viewBox="0 0 22 19.1"><path d="M13.1 3.7H12Q10.5 3.7 10.5 5.2V13.8Q10.5 15.3 12 15.3H13.1M6.2 9.7H10.5" stroke="#d4d4d4" stroke-width="1.5" fill="none"/><rect x="0" y="6.4" width="6.2" height="6.5" rx="1.6" fill="#f0f0f0"/><rect x="13.1" y="0" width="8.9" height="8" rx="1.9" fill="#f0f0f0"/><rect x="13.1" y="11.3" width="8.9" height="7.8" rx="1.9" fill="#f0f0f0"/></svg>
<span style="left:181.3px;top:607px;font-size:17px;color:#e6e6e6;letter-spacing:0.08px;">emergency_contact</span>
<div style="left:335.3px;top:601.4px;width:64px;height:28.2px;background:#3b2e55;border-radius:7px;"></div>
<span style="left:346.15px;top:608px;font-size:15.5px;color:#b69df8;letter-spacing:0.36px;-webkit-text-stroke:0.35px #b69df8;">Struct</span>
<div style="left:151.6px;top:638.2px;width:97.5px;height:30.6px;background:#194833;border:1px solid #288552;"></div>
<span style="left:161px;top:646px;font-size:17px;color:#e6e6e6;letter-spacing:-0.48px;">name</span>
<div style="left:207px;top:639.2px;width:40.6px;height:28.6px;background:#354f69;border-radius:7px 0 0 7px;"></div>
<span style="left:217.39px;top:645px;font-size:15.5px;color:#b69df8;-webkit-text-stroke:0.35px #b69df8;">Str</span>
<div style="left:256.9px;top:638.2px;width:103.3px;height:30.6px;background:#194833;border:1px solid #288552;"></div>
<span style="left:266.3px;top:646px;font-size:17px;color:#e6e6e6;letter-spacing:-0.1px;">phone</span>
<div style="left:318.1px;top:639.2px;width:40.6px;height:28.6px;background:#354f69;border-radius:7px 0 0 7px;"></div>
<span style="left:328.49px;top:645px;font-size:15.5px;color:#b69df8;-webkit-text-stroke:0.35px #b69df8;">Str</span>
<div style="left:151.6px;top:677.4px;width:143.4px;height:30.6px;background:#194833;border:1px solid #288552;"></div>
<span style="left:161px;top:685px;font-size:17px;color:#e6e6e6;">relationship</span>
<div style="left:252.9px;top:678.4px;width:40.6px;height:28.6px;background:#354f69;border-radius:7px 0 0 7px;"></div>
<span style="left:263.29px;top:685px;font-size:15.5px;color:#b69df8;-webkit-text-stroke:0.35px #b69df8;">Str</span>
<div style="left:142.4px;top:725.5px;width:347.6px;height:194.6px;border:1px solid #4a4851;"></div>
<svg style="left:147.9px;top:731.3px" width="22" height="19.1" viewBox="0 0 22 19.1"><path d="M13.1 3.7H12Q10.5 3.7 10.5 5.2V13.8Q10.5 15.3 12 15.3H13.1M6.2 9.7H10.5" stroke="#d4d4d4" stroke-width="1.5" fill="none"/><rect x="0" y="6.4" width="6.2" height="6.5" rx="1.6" fill="#f0f0f0"/><rect x="13.1" y="0" width="8.9" height="8" rx="1.9" fill="#f0f0f0"/><rect x="13.1" y="11.3" width="8.9" height="7.8" rx="1.9" fill="#f0f0f0"/></svg>
<span style="left:181.3px;top:732px;font-size:17px;color:#e6e6e6;letter-spacing:-0.03px;">insurance</span>
<div style="left:259.2px;top:726.7px;width:64px;height:28.2px;background:#3b2e55;border-radius:7px;"></div>
<span style="left:270.05px;top:733px;font-size:15.5px;color:#b69df8;letter-spacing:0.36px;-webkit-text-stroke:0.35px #b69df8;">Struct</span>
<div style="left:151.6px;top:763.8px;width:118.2px;height:30.6px;background:#194833;border:1px solid #288552;"></div>
<span style="left:161px;top:772px;font-size:17px;color:#e6e6e6;letter-spacing:0.05px;">provider</span>
<div style="left:227.7px;top:764.8px;width:40.6px;height:28.6px;background:#354f69;border-radius:7px 0 0 7px;"></div>
<span style="left:238.09px;top:771px;font-size:15.5px;color:#b69df8;-webkit-text-stroke:0.35px #b69df8;">Str</span>
<div style="left:277.9px;top:763.8px;width:167.1px;height:30.6px;background:#194833;border:1px solid #288552;"></div>
<span style="left:287.3px;top:772px;font-size:17px;color:#e6e6e6;letter-spacing:0.01px;">policy_number</span>
<div style="left:402.9px;top:764.8px;width:40.6px;height:28.6px;background:#354f69;border-radius:7px 0 0 7px;"></div>
<span style="left:413.29px;top:771px;font-size:15.5px;color:#b69df8;-webkit-text-stroke:0.35px #b69df8;">Str</span>
<div style="left:151.6px;top:802.4px;width:167.3px;height:30.6px;background:#194833;border:1px solid #288552;"></div>
<span style="left:161px;top:810px;font-size:17px;color:#e6e6e6;letter-spacing:0.03px;">group_number</span>
<div style="left:276.8px;top:803.4px;width:40.6px;height:28.6px;background:#354f69;border-radius:7px 0 0 7px;"></div>
<span style="left:287.19px;top:810px;font-size:15.5px;color:#b69df8;-webkit-text-stroke:0.35px #b69df8;">Str</span>
<div style="left:151.6px;top:841.3px;width:199.4px;height:30.6px;background:#194833;border:1px solid #288552;"></div>
<span style="left:161px;top:849px;font-size:17px;color:#e6e6e6;letter-spacing:0.02px;">policyholder_name</span>
<div style="left:308.9px;top:842.3px;width:40.6px;height:28.6px;background:#354f69;border-radius:7px 0 0 7px;"></div>
<span style="left:319.29px;top:849px;font-size:15.5px;color:#b69df8;-webkit-text-stroke:0.35px #b69df8;">Str</span>
<div style="left:151.6px;top:880.4px;width:229.5px;height:30.6px;background:#194833;border:1px solid #288552;"></div>
<span style="left:161px;top:888px;font-size:17px;color:#e6e6e6;letter-spacing:0.09px;">relationship_to_patient</span>
<div style="left:339px;top:881.4px;width:40.6px;height:28.6px;background:#354f69;border-radius:7px 0 0 7px;"></div>
<span style="left:349.39px;top:888px;font-size:15.5px;color:#b69df8;-webkit-text-stroke:0.35px #b69df8;">Str</span>
<div style="left:142.4px;top:929.1px;width:177.5px;height:30.6px;background:#194833;border:1px solid #288552;"></div>
<span style="left:151.8px;top:937px;font-size:17px;color:#e6e6e6;letter-spacing:0.07px;">reason_for_visit</span>
<div style="left:277.8px;top:930.1px;width:40.6px;height:28.6px;background:#354f69;border-radius:7px 0 0 7px;"></div>
<span style="left:288.19px;top:936px;font-size:15.5px;color:#b69df8;-webkit-text-stroke:0.35px #b69df8;">Str</span>
<div style="left:142.4px;top:967.5px;width:206.6px;height:30.6px;background:#194833;border:1px solid #288552;"></div>
<span style="left:151.8px;top:975px;font-size:17px;color:#e6e6e6;letter-spacing:0.12px;">symptoms_duration</span>
<div style="left:306.9px;top:968.5px;width:40.6px;height:28.6px;background:#354f69;border-radius:7px 0 0 7px;"></div>
<span style="left:317.29px;top:975px;font-size:15.5px;color:#b69df8;-webkit-text-stroke:0.35px #b69df8;">Str</span>
<div style="left:23.8px;top:981.5px;width:43.2px;height:4px;background:#ffffff;"></div>
</div>
<svg style="left:0;top:0" width="2732" height="984" viewBox="0 0 2732 984"><g fill="none" stroke="#8c52ff" stroke-width="12" stroke-linecap="round" stroke-linejoin="round"><circle cx="1518.1" cy="360.7" r="18.1"/><path d="M1518.1 378.8V620"/><path d="M1500.3 598.2L1518.1 622.2L1535.9 598.2"/></g></svg>
</div>
</body></html>
